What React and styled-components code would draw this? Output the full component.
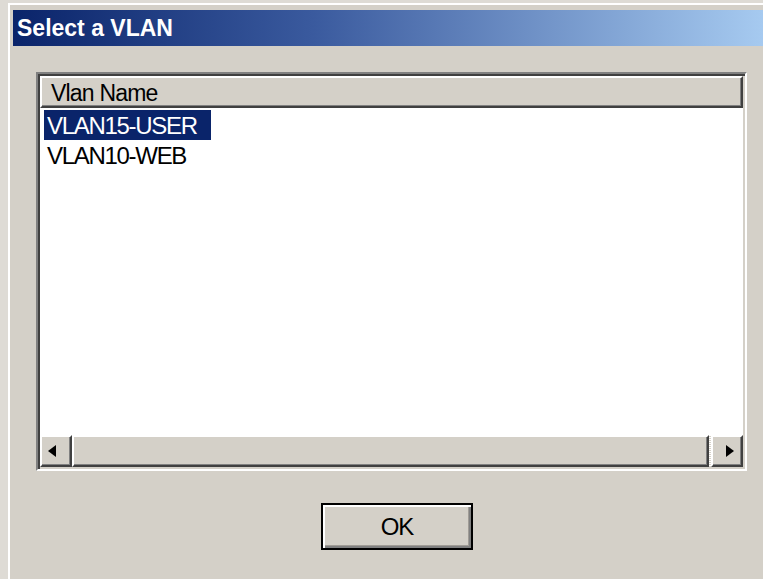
import React from "react";
import styled, { createGlobalStyle } from "styled-components";

const Global = createGlobalStyle`
  html, body {
    margin: 0;
    padding: 0;
    height: 100%;
    overflow: hidden;
    background: #dedbd5;
  }
  #root { height: 100%; }
  * { box-sizing: border-box; }
`;

const Desktop = styled.div`
  height: 100%;
  padding: 3px 0 0 8px;
  display: flex;
`;

const Window = styled.div`
  flex: 1;
  display: flex;
  flex-direction: column;
  background: #d4d0c8;
  border-top: 2px solid #ffffff;
  border-left: 2px solid #ffffff;
  padding: 5px 0 0 3px;
`;

const TitleBar = styled.div`
  height: 36px;
  line-height: 37px;
  padding-left: 4px;
  background: linear-gradient(to right, #0a246a 0%, #3a5a9e 40%, #a6caf0 100%);
  color: #ffffff;
  font-family: "Liberation Sans", Arial, sans-serif;
  font-weight: bold;
  font-size: 23px;
  letter-spacing: 0px;
  white-space: nowrap;
`;

const Body = styled.div`
  padding: 26px 0 0 23px;
  display: flex;
  flex-direction: column;
`;

const ListView = styled.div`
  width: 711px;
  height: 399px;
  display: flex;
  flex-direction: column;
  background: #ffffff;
  border: 2px solid;
  border-color: #808080 #ffffff #ffffff #808080;
  box-shadow: inset 2px 2px 0 #404040, inset -2px -2px 0 #d4d0c8;
  padding: 2px;
  font-family: "Liberation Sans", Arial, sans-serif;
`;

const Header = styled.div`
  height: 32px;
  flex: none;
  display: flex;
  background: #d4d0c8;
`;

const HeaderCell = styled.div`
  flex: 1;
  height: 100%;
  padding-left: 9px;
  line-height: 30px;
  font-size: 23px;
  letter-spacing: -0.8px;
  color: #000;
  border-top: 2px solid #ffffff;
  border-left: 2px solid #ffffff;
  border-right: 2px solid #404040;
  border-bottom: 2px solid #404040;
  box-shadow: inset -1px -1px 0 #808080;
`;

const Rows = styled.div`
  flex: 1;
  padding: 2px 0 0 4px;
  background: #ffffff;
`;

const Row = styled.div`
  height: 30px;
`;

const RowLabel = styled.span`
  display: inline-block;
  height: 30px;
  line-height: 31px;
  padding: 0 14px 0 3px;
  font-size: 24px;
  letter-spacing: -1.3px;
  color: ${(p) => (p.$selected ? "#ffffff" : "#000000")};
  background: ${(p) => (p.$selected ? "#0a246a" : "transparent")};
`;

const HScroll = styled.div`
  height: 32px;
  flex: none;
  display: flex;
  background-color: #ece9e4;
  background-image: repeating-linear-gradient(
    to bottom,
    #ffffff 0 1px,
    #d4d0c8 1px 2px
  );
`;

const Raised = styled.div`
  height: 100%;
  display: flex;
  align-items: center;
  justify-content: center;
  background: #d4d0c8;
  border-top: 2px solid #ffffff;
  border-left: 2px solid #ffffff;
  border-right: 2px solid #404040;
  border-bottom: 2px solid #404040;
  box-shadow: inset -1px -1px 0 #808080;
`;

const ArrowButton = styled(Raised)`
  width: 32px;
  flex: none;
  padding: ${(p) => (p.$dir === "left" ? "0 8px 0 0" : "0 0 0 6px")};
`;

const Thumb = styled(Raised)`
  flex: 1;
`;

const TrackGap = styled.div`
  width: 2px;
  flex: none;
`;

const ButtonRow = styled.div`
  padding: 32px 0 0 285px;
  display: flex;
`;

const PushButton = styled.button`
  width: 152px;
  height: 47px;
  padding: 0;
  background: #d4d0c8;
  border: 2px solid #000000;
  box-shadow: inset 2px 2px 0 #ffffff, inset -2px -2px 0 #808080,
    inset -3px -3px 0 #a09c96;
  font-family: "Liberation Sans", Arial, sans-serif;
  font-size: 24px;
  color: #000;
  letter-spacing: -1.2px;
  cursor: default;
`;

const Triangle = ({ dir }) => (
  <svg width="8" height="12" viewBox="0 0 8 12">
    {dir === "left" ? (
      <polygon points="8,0 0,6 8,12" fill="#000" />
    ) : (
      <polygon points="0,0 8,6 0,12" fill="#000" />
    )}
  </svg>
);

export default function App() {
  return (
    <>
      <Global />
      <Desktop>
        <Window>
          <TitleBar>Select a VLAN</TitleBar>
          <Body>
            <ListView>
              <Header>
                <HeaderCell>Vlan Name</HeaderCell>
              </Header>
              <Rows>
                <Row>
                  <RowLabel $selected>VLAN15-USER</RowLabel>
                </Row>
                <Row>
                  <RowLabel>VLAN10-WEB</RowLabel>
                </Row>
              </Rows>
              <HScroll>
                <ArrowButton $dir="left">
                  <Triangle dir="left" />
                </ArrowButton>
                <Thumb />
                <TrackGap />
                <ArrowButton $dir="right">
                  <Triangle dir="right" />
                </ArrowButton>
              </HScroll>
            </ListView>
            <ButtonRow>
              <PushButton>OK</PushButton>
            </ButtonRow>
          </Body>
        </Window>
      </Desktop>
    </>
  );
}
